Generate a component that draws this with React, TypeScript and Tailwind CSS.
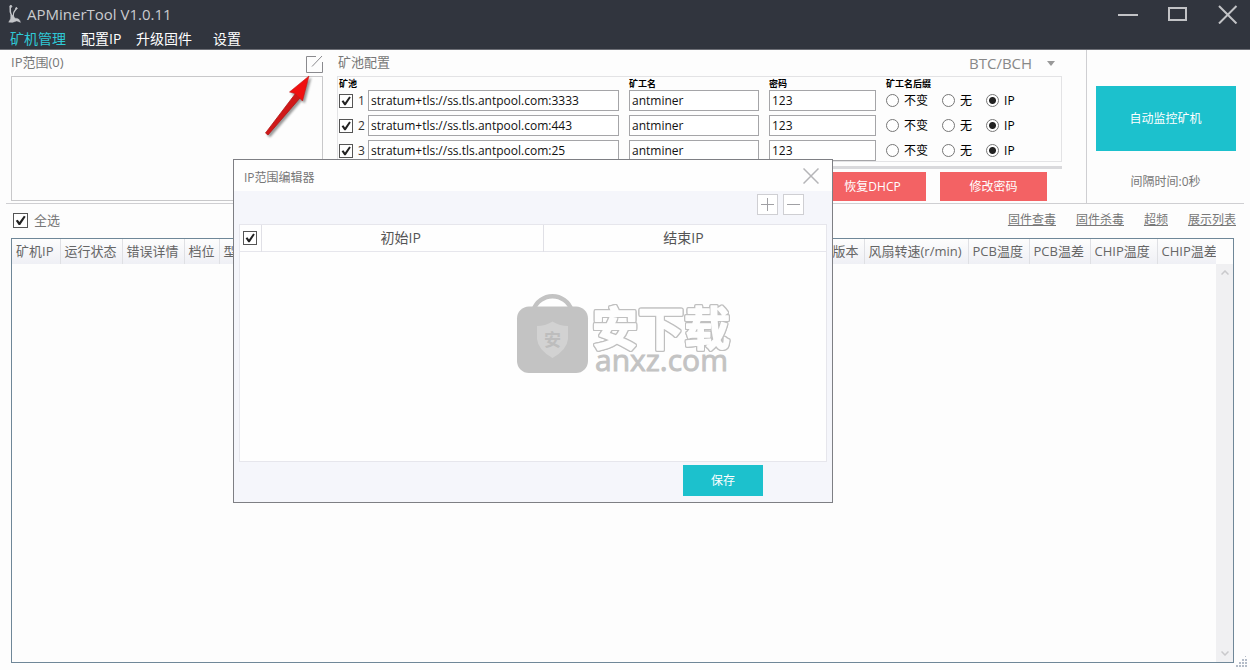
import { useState } from "react";

type PoolRow = { id: number; url: string; worker: string; password: string };

const pools: PoolRow[] = [
  { id: 1, url: "stratum+tls://ss.tls.antpool.com:3333", worker: "antminer", password: "123" },
  { id: 2, url: "stratum+tls://ss.tls.antpool.com:443", worker: "antminer", password: "123" },
  { id: 3, url: "stratum+tls://ss.tls.antpool.com:25", worker: "antminer", password: "123" },
];

const suffixes = ["不变", "无", "IP"];

const menu = [
  { label: "矿机管理", style: "w-[71px] text-[#2fc9d6]" },
  { label: "配置IP", style: "w-[55px] text-white" },
  { label: "升级固件", style: "w-[77px] text-white" },
  { label: "设置", style: "text-white" },
];

const columns = [
  { label: "矿机IP", width: "w-[48px]" },
  { label: "运行状态", width: "w-[62px]" },
  { label: "错误详情", width: "w-[62px]" },
  { label: "档位", width: "w-[35px]" },
  { label: "型号", width: "w-[40px]" },
  { label: "", width: "" },
  { label: "固件版本", width: "w-[62px]" },
  { label: "风扇转速(r/min)", width: "w-[104px]" },
  { label: "PCB温度", width: "w-[61px]" },
  { label: "PCB温差", width: "w-[61px]" },
  { label: "CHIP温度", width: "w-[67px]" },
  { label: "CHIP温差", width: "w-[59px]" },
];

function Check({ label, large = false }: { label: string; large?: boolean }) {
  const size = large ? "size-[15px]" : "size-[14px]";
  return (
    <span className="grid shrink-0">
      <input
        type="checkbox"
        defaultChecked
        aria-label={label}
        className={`${size} peer col-start-1 row-start-1 appearance-none border border-[#555] bg-white`}
      />
      <svg
        viewBox="0 0 14 14"
        className={`${size} pointer-events-none invisible col-start-1 row-start-1 peer-checked:visible`}
      >
        <path d="M2.6 7.2 L4.4 6.2 L6 8.4 L10.2 2.6 L11.8 3.4 L6.7 11.2 L5.3 11.2 Z" fill="#222" />
      </svg>
    </span>
  );
}

function TitleBar() {
  return (
    <header className="border-b border-[#6d6f76] bg-[#31353e]">
      <div className="flex h-[28px] items-center justify-between pr-3 pl-2">
        <div className="flex items-center gap-[5px]">
          <svg viewBox="0 0 14 20" className="h-5 w-[14px]" fill="none" stroke="#c4c6ca">
            <path d="M2.200 3 Q1.600 8 4 13" strokeWidth="1.500" />
            <path d="M5.200 12 Q5.200 8 8 5" strokeWidth="1.300" />
            <circle cx="2.800" cy="2.400" r="1" fill="#c4c6ca" />
            <circle cx="8.400" cy="4.400" r="0.800" fill="#c4c6ca" />
            <path d="M2.800 11 L5.400 11.500 L7 14.200 Q11.500 13.800 12.600 18.400 L8.800 17 L4.400 18.400 L0.600 18.200 Q3.200 15 2.800 11 Z" fill="#c4c6ca" strokeWidth="0.300" />
          </svg>
          <h1 className="text-[15px] leading-5 text-[#c9cbcf]">APMinerTool V1.0.11</h1>
        </div>
        <div className="flex gap-[30px]">
          <button aria-label="最小化" className="flex items-center">
            <svg viewBox="0 0 20 20" className="size-5" stroke="#c2c3c6" strokeWidth="2" fill="none">
              <path d="M0 11 H20" />
            </svg>
          </button>
          <button aria-label="最大化" className="flex items-center">
            <svg viewBox="0 0 20 20" className="size-5" stroke="#c2c3c6" strokeWidth="2" fill="none">
              <rect x="1" y="4" width="17" height="12" />
            </svg>
          </button>
          <button aria-label="关闭" className="flex items-center">
            <svg viewBox="0 0 20 20" className="size-5" stroke="#c2c3c6" strokeWidth="2" fill="none">
              <path d="M1 2 L18.500 19.500 M18.500 2 L1 19.500" />
            </svg>
          </button>
        </div>
      </div>
      <nav className="flex h-[21px] items-center pl-[10px] text-[14px] leading-5">
        {menu.map((m) => (
          <a key={m.label} href="#" className={`${m.style} whitespace-nowrap`}>
            {m.label}
          </a>
        ))}
      </nav>
    </header>
  );
}

function PoolTable() {
  const grid =
    "grid grid-cols-[19px_minmax(0,251fr)_minmax(0,130fr)_minmax(0,107fr)_165px] items-center gap-x-[10px]";
  const field = "h-[21px] w-full min-w-0 border border-[#a5a5a8] bg-white pl-[2px] text-[12px] leading-4 text-[#111]";
  return (
    <div className="border border-[#e3e3e5] pr-[10px] pl-px">
      <div className={`${grid} h-[13px] text-[9px] leading-[11px] font-bold text-black`}>
        <span className="whitespace-nowrap">矿池</span>
        <span />
        <span>矿工名</span>
        <span>密码</span>
        <span>矿工名后缀</span>
      </div>
      <div className="flex flex-col gap-1">
        {pools.map((p) => (
          <div key={p.id} className={grid}>
            <div className="flex items-center gap-[5px] text-[12px] text-[#333]">
              <Check label={`矿池 ${p.id}`} />
              <span>{p.id}</span>
            </div>
            <input aria-label="矿池" defaultValue={p.url} className={field} />
            <input aria-label="矿工名" defaultValue={p.worker} className={field} />
            <input aria-label="密码" defaultValue={p.password} className={field} />
            <div className="flex items-center gap-[14px] text-[12px] leading-4 text-black">
              {suffixes.map((s) => (
                <label key={s} className="flex items-center gap-[5px] whitespace-nowrap">
                  <input
                    type="radio"
                    name={`suffix-${p.id}`}
                    defaultChecked={s === "IP"}
                    className="size-[13px] appearance-none rounded-full border border-[#777] bg-white checked:bg-[radial-gradient(circle,#222_0_3px,#fff_4px)]"
                  />
                  {s}
                </label>
              ))}
            </div>
          </div>
        ))}
      </div>
    </div>
  );
}

function RangeDialog({ onClose }: { onClose: () => void }) {
  return (
    <section
      role="dialog"
      aria-label="IP范围编辑器"
      className="absolute top-[159px] left-[233px] w-[600px] border border-[#7e7f84] bg-[#f5f6fb]"
    >
      <div className="flex h-[31px] items-center justify-between bg-[#fefefe] pr-[13px] pl-[10px]">
        <h2 className="pt-1 text-[12px] leading-4 text-[#777]">IP范围编辑器</h2>
        <button aria-label="关闭" onClick={onClose}>
          <svg viewBox="0 0 16 16" className="size-4" stroke="#b5b5b8" strokeWidth="1.500">
            <path d="M0.500 0.500 L15.500 15.500 M15.500 0.500 L0.500 15.500" />
          </svg>
        </button>
      </div>
      <div className="flex h-[33px] items-start justify-end gap-[5px] pt-[3px] pr-7">
        <button aria-label="添加" className="border border-[#cfcfd3] bg-white p-[3px]">
          <svg viewBox="0 0 13 13" className="size-[13px]" stroke="#a0a0a4">
            <path d="M0 6.500 H13 M6.500 0 V13" />
          </svg>
        </button>
        <button aria-label="删除" className="border border-[#cfcfd3] bg-white p-[3px]">
          <svg viewBox="0 0 13 13" className="size-[13px]" stroke="#a0a0a4">
            <path d="M0 6.500 H13" />
          </svg>
        </button>
      </div>
      <div className="mx-[5px] h-[238px] border border-[#e6e6ec] bg-[#fefefe]">
        <table className="w-full table-fixed border-collapse text-[14px] leading-5 text-[#555]">
          <thead>
            <tr className="h-[26px] border-b border-[#e6e6ec]">
              <th className="w-[21px] border-r border-[#e0e0e6] pl-[3px]">
                <Check label="全部范围" />
              </th>
              <th className="border-r border-[#e0e0e6] pr-[3px] font-normal">初始IP</th>
              <th className="pr-[3px] font-normal">结束IP</th>
            </tr>
          </thead>
        </table>
      </div>
      <div className="flex h-10 items-start justify-end pt-[3px] pr-[69px]">
        <button className="h-[31px] w-20 bg-[#1cc1cd] text-[12px] text-white">保存</button>
      </div>
    </section>
  );
}

function Watermark() {
  return (
    <svg
      viewBox="0 0 224 96"
      className="pointer-events-none absolute top-[292px] left-[516px] h-[96px] w-[224px]"
    >
      <path d="M17.500 18 A20 20 0 0 1 55.500 18" fill="none" stroke="#c3c3c3" strokeWidth="4.500" />
      <rect x="1" y="14.500" width="71" height="66.500" rx="12" fill="#c3c3c3" />
      <path
        d="M36.500 29.500 Q44 34 52 34 V47 Q51 58 36.500 66 Q22 58 21 47 V34 Q29 34 36.500 29.500 Z"
        fill="#d2d2d2"
      />
      <text x="36.500" y="53.500" textAnchor="middle" fontSize="17" fontWeight="700" fill="#bdbdbd">
        安
      </text>
      <text
        x="76"
        y="53"
        fontSize="46"
        fontWeight="700"
        fill="#fefefe"
        stroke="#fefefe"
        strokeWidth="1.500"
        strokeLinejoin="round"
        className="[filter:drop-shadow(1px_0_0_#c0c0c0)_drop-shadow(-1px_0_0_#c0c0c0)_drop-shadow(0_1px_0_#c0c0c0)_drop-shadow(0_-1px_0_#c0c0c0)]"
      >
        安下载
      </text>
      <text x="79" y="79" fontSize="30" fill="#c3c3c3" stroke="#c3c3c3" strokeWidth="0.900">
        anxz.com
      </text>
    </svg>
  );
}

function PointerArrow() {
  return (
    <svg
      viewBox="0 0 60 72"
      className="pointer-events-none absolute top-[70px] left-[258px] h-[72px] w-[60px] drop-shadow-[2px_2px_1px_rgba(0,0,0,0.4)]"
    >
      <path d="M39.500 26 L42 28 L10 65 L7.500 63 L37.500 23.500 Z" fill="#d01818" stroke="#b01515" strokeWidth="0.800" />
      <path d="M51 6 L44.500 31 L39.500 26 L37 23.500 L31.500 22 Z" fill="#f01010" stroke="#c01515" strokeWidth="0.600" />
    </svg>
  );
}

export default function App() {
  const [dialogOpen, setDialogOpen] = useState(true);
  return (
    <div className="relative flex min-h-screen flex-col bg-[#fdfdfd] font-['Open_Sans','Noto_Sans_CJK_SC',sans-serif] text-[#777]">
      <TitleBar />

      <div className="mx-[6px] flex border-b border-[#cfcfd2]">
        <section className="flex w-[317px] shrink-0 flex-col pb-[2px] pl-[5px]">
          <div className="flex h-[26px] items-start justify-between">
            <h2 className="pt-[2px] text-[13px] leading-5">IP范围(0)</h2>
            <button aria-label="编辑IP范围" onClick={() => setDialogOpen(true)} className="pt-[5px]">
              <svg viewBox="0 0 18 18" className="size-[18px]" fill="none" stroke="#8a8a8e">
                <path d="M11 1.500 H1.500 V17.500 H17.500 V7" />
                <path d="M7 11.500 L17 1" />
              </svg>
            </button>
          </div>
          <div className="flex-1 border border-[#c8c8ca]" />
        </section>

        <section className="ml-[14px] min-w-0 flex-1 pr-6">
          <div className="flex h-[26px] items-start justify-between">
            <h2 className="pt-[2px] pl-px text-[13px] leading-5">矿池配置</h2>
            <div className="flex items-center pt-[3px] pr-[7px]">
              <select aria-label="币种" className="w-[78px] appearance-none bg-transparent text-[15px] leading-5 text-[#888]">
                <option>BTC/BCH</option>
              </select>
              <svg viewBox="0 0 8 5" className="h-[5px] w-2">
                <path d="M0 0 H8 L4 5 Z" fill="#999" />
              </svg>
            </div>
          </div>
          <PoolTable />
          <div className="mt-[4px] h-[3px] bg-[#d9d9dc]" />
          <div className="flex justify-end gap-[14px] pt-[3px] pr-[15px] pb-[2px]">
            <button className="h-[29px] w-[107px] bg-[#f36264] text-[12px] text-white">恢复DHCP</button>
            <button className="h-[29px] w-[107px] bg-[#f36264] text-[12px] text-white">修改密码</button>
          </div>
        </section>

        <aside className="flex w-[158px] shrink-0 flex-col items-center border-l border-[#cfcfd2] pt-[36px]">
          <button className="h-[65px] w-[140px] bg-[#1cc1cd] text-[12px] text-white">自动监控矿机</button>
          <p className="pt-[23px] text-[12px] leading-4">间隔时间:0秒</p>
        </aside>
      </div>

      <div className="flex h-[34px] items-center justify-between pr-[14px] pb-[2px] pl-[13px]">
        <div className="flex items-center gap-[6px] text-[13px] leading-5">
          <Check label="全选" large />
          <span>全选</span>
        </div>
        <div className="flex gap-5 text-[12px] leading-4 underline underline-offset-1">
          <a href="#">固件查毒</a>
          <a href="#">固件杀毒</a>
          <a href="#">超频</a>
          <a href="#">展示列表</a>
        </div>
      </div>

      <main className="mr-4 mb-[7px] ml-[11px] flex flex-1 flex-col border border-[#6f8798]">
        <div className="mr-[17px]">
          <table className="w-full table-fixed border-collapse text-[13px] leading-5 text-[#666]">
            <thead>
              <tr className="h-[25px] bg-linear-to-b from-[#fdfdfd] to-[#eff0f5]">
                {columns.map((c, i) => (
                  <th
                    key={i}
                    className={`${c.width} overflow-hidden border-r border-[#dfe0e4] px-1 pb-[2px] text-left font-normal whitespace-nowrap last:border-r-0 last:pr-0`}
                  >
                    {c.label}
                  </th>
                ))}
              </tr>
            </thead>
          </table>
        </div>
        <div className="flex w-[17px] flex-1 flex-col items-center justify-between self-end bg-[#f0f0f2] py-[6px]">
          <svg viewBox="0 0 8 5" className="h-[5px] w-2" fill="none" stroke="#c9c9cc" strokeWidth="1.500">
            <path d="M0.500 4.500 L4 1 L7.500 4.500" />
          </svg>
          <svg viewBox="0 0 8 5" className="h-[5px] w-2" fill="none" stroke="#c9c9cc" strokeWidth="1.500">
            <path d="M0.500 0.500 L4 4 L7.500 0.500" />
          </svg>
        </div>
      </main>

      <svg viewBox="0 0 12 12" className="absolute right-[2px] bottom-[2px] size-3" fill="#b4bcc8">
        <path d="M9 0h1v1h-1z M9 3h2v2h-2z M6 3h2v2h-2z M9 6h2v2h-2z M6 6h2v2h-2z M3 6h2v2h-2z M9 9h2v2h-2z M6 9h2v2h-2z M3 9h2v2h-2z M0 9h2v2h-2z" />
      </svg>

      {dialogOpen && <RangeDialog onClose={() => setDialogOpen(false)} />}
      <Watermark />
      <PointerArrow />
    </div>
  );
}
